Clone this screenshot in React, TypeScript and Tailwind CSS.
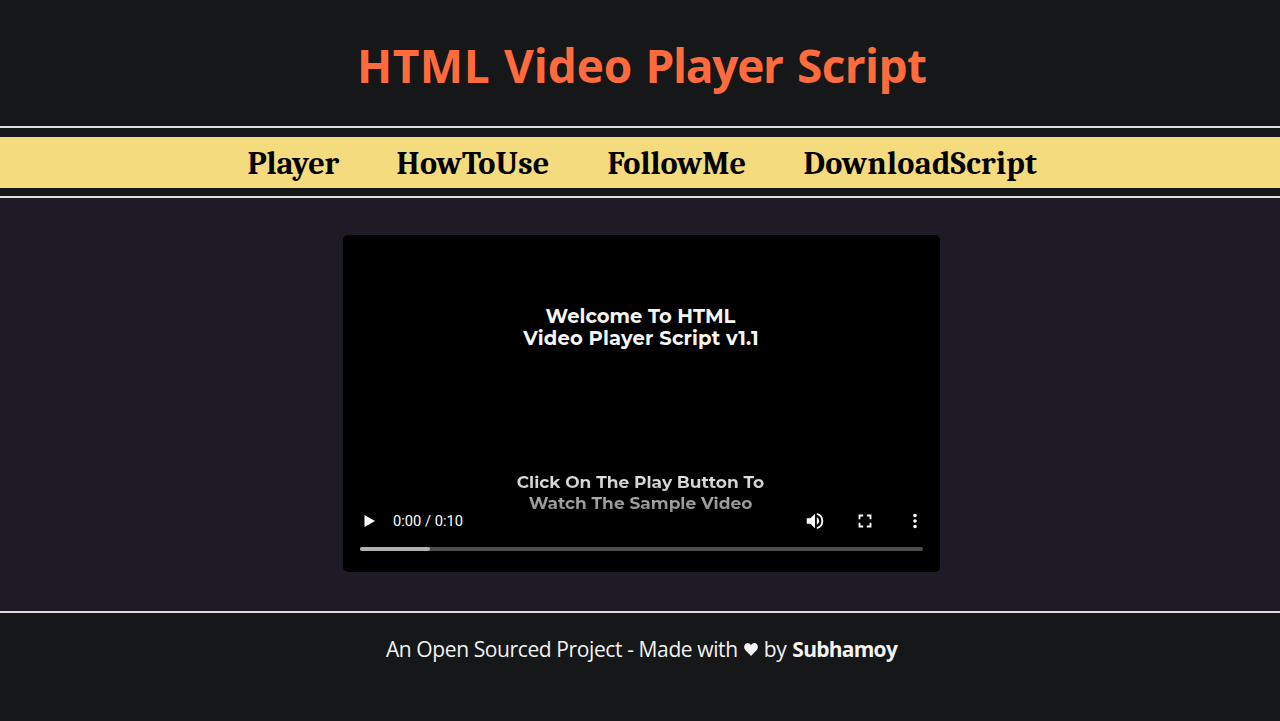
const titleWords = [
  { text: "HTML", cls: "w-[147px] tracking-[0.5px]" },
  { text: "Video", cls: "w-[141.5px] tracking-[-0.1px]" },
  { text: "Player", cls: "w-[151.5px] tracking-[-1.3px]" },
  { text: "Script", cls: "tracking-[-0.6px]" },
];

const navItems = [
  { label: "Player", cls: "w-[149px] tracking-[-0.1px]" },
  { label: "HowToUse", cls: "w-[211px] tracking-[0.2px]" },
  { label: "FollowMe", cls: "w-[196px] tracking-[0.05px]" },
  { label: "DownloadScript", cls: "w-[234px] tracking-[0.25px]" },
];

function Header() {
  return (
    <header className="flex h-[126px] shrink-0 pt-[32px] pl-[357px]">
      <h1 className="flex whitespace-nowrap font-['Segoe_UI','Open_Sans',sans-serif] text-[46px] leading-[66px] font-bold text-[#ff6b3d]">
        {titleWords.map((word) => (
          <span key={word.text} className={`shrink-0 ${word.cls}`}>
            {word.text}{" "}
          </span>
        ))}
      </h1>
    </header>
  );
}

function Nav() {
  return (
    <nav className="flex h-[72px] shrink-0 flex-col justify-center border-y-2 border-[#dededf]">
      <ul className="flex h-[51px] items-center bg-[#f3db7e] pt-[2px] pl-[247.5px] font-[Cambria,Caladea,'Liberation_Serif',serif] text-[32.3px] leading-[51px] font-bold text-black">
        {navItems.map((item) => (
          <li key={item.label} className={`shrink-0 whitespace-nowrap ${item.cls}`}>
            <a href="#">{item.label}</a>
          </li>
        ))}
      </ul>
    </nav>
  );
}

function Player() {
  return (
    <section className="flex h-[337px] w-[597px] flex-col rounded-[5px] bg-black font-[Montserrat,Lato,sans-serif] font-bold">
      <div className="pt-[70px] text-center text-[19.5px] leading-[22px] text-[#f5f5f5]">
        <p className="pr-[2px]">Welcome To HTML</p>
        <p className="pr-[1px] tracking-[0.16px]">Video Player Script v1.1</p>
      </div>
      <div className="mt-[123px] text-center text-[17px] leading-[21px]">
        <p className="bg-linear-to-b from-[#e8e8e8] to-[#c4c4c4] bg-clip-text pr-[2px] text-transparent">
          Click On The Play Button To
        </p>
        <p className="bg-linear-to-b from-[#b4b4b4] to-[#858585] bg-clip-text pr-[2px] text-transparent">
          Watch The Sample Video
        </p>
      </div>
      <div className="-mt-[5px] flex h-[24px] items-center pr-[17px] pl-[21px] text-white">
        <svg className="size-[12px]" viewBox="0 0 12 12" fill="currentColor">
          <path d="M.5 0v12L11 6z" />
        </svg>
        <span className="ml-[17px] font-[Roboto,'Liberation_Sans',sans-serif] text-[14.7px] leading-[24px] font-normal">
          0:00 / 0:10
        </span>
        <svg className="ml-auto size-[22px]" viewBox="0 0 24 24" fill="currentColor">
          <path d="M3 9v6h4l5 5V4L7 9H3zm13.5 3A4.5 4.5 0 0 0 14 7.97v8.05A4.5 4.5 0 0 0 16.5 12zM14 3.23v2.06a7 7 0 0 1 0 13.42v2.06a9 9 0 0 0 0-17.54z" />
        </svg>
        <svg className="ml-[28px] size-[22px]" viewBox="0 0 24 24" fill="currentColor">
          <path d="M7 14H5v5h5v-2H7v-3zM5 10h2V7h3V5H5v5zm12 7h-3v2h5v-5h-2v3zM14 5v2h3v3h2V5h-5z" />
        </svg>
        <svg className="-mr-[3px] ml-[28px] size-[22px]" viewBox="0 0 24 24" fill="currentColor">
          <path d="M12 8a2 2 0 1 0 0-4 2 2 0 0 0 0 4zm0 2a2 2 0 1 0 0 4 2 2 0 0 0 0-4zm0 6a2 2 0 1 0 0 4 2 2 0 0 0 0-4z" />
        </svg>
      </div>
      <div className="mx-[17px] mt-[14px] h-[4px] overflow-hidden rounded-full bg-[#4d4d4d]">
        <div className="h-full w-[70px] rounded-r-[2px] bg-[#b0b0b0]" />
      </div>
    </section>
  );
}

function Footer() {
  return (
    <footer className="flex h-[110px] items-start justify-center border-t-2 border-[#dededf] pt-[20px] font-['Segoe_UI','Open_Sans',sans-serif] text-[21px] leading-[32px] text-[#f2f2f2]">
      <p className="flex items-center whitespace-nowrap pl-[3px]">
        <span className="tracking-[-0.39px]">An Open Sourced Project - Made with</span>
        <svg className="mx-[6px] mt-[1px] h-[13px] w-[14px]" viewBox="0 0 14 13" fill="currentColor">
          <path d="M7 13 1.2 6.9C-.3 5.3-.2 2.5 1.3 1 2.9-.5 5.6-.2 7 2.2 8.4-.2 11.1-.5 12.7 1c1.5 1.5 1.6 4.3.1 5.9z" />
        </svg>
        <span className="tracking-[-0.36px]">by</span>
        <strong className="ml-[6px] tracking-[-0.75px]">Subhamoy</strong>
      </p>
    </footer>
  );
}

export default function App() {
  return (
    <div className="flex h-[721px] flex-col overflow-hidden bg-[#151718]">
      <Header />
      <Nav />
      <main className="flex h-[413px] shrink-0 justify-center bg-[#1e1b26] pt-[37px] pl-[3px]">
        <Player />
      </main>
      <Footer />
    </div>
  );
}
